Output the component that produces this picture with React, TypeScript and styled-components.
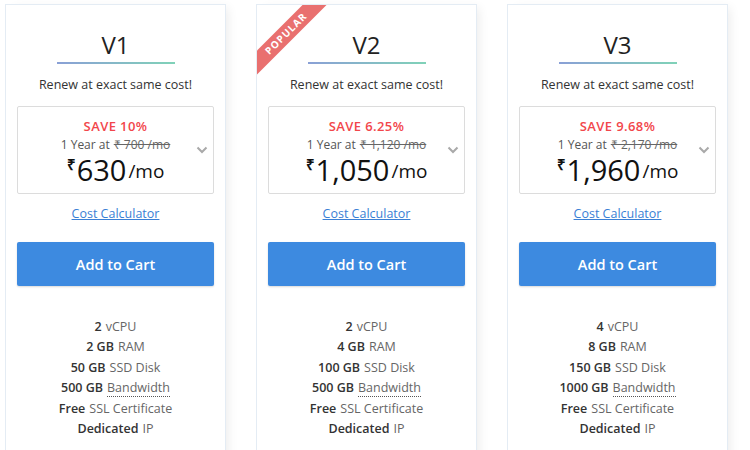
import React from "react";
import styled, { createGlobalStyle } from "styled-components";

const Global = createGlobalStyle`
  html, body { margin: 0; padding: 0; background: #ffffff; overflow: hidden; }
  body { font-family: "Open Sans", "Liberation Sans", sans-serif; color: #333; }
`;

const Row = styled.div`
  display: flex;
  gap: 30px;
  padding: 4px 0 0 5px;
  height: 446px;
  overflow: hidden;
`;

const Card = styled.div`
  position: relative;
  box-sizing: border-box;
  width: 221px;
  height: 470px;
  background: #fff;
  border: 1px solid #e4ecf4;
  box-shadow: 6px 0 10px -4px rgba(0, 0, 0, 0.08);
  padding: 26px 11px 0 11px;
  display: flex;
  flex-direction: column;
  align-items: center;
  overflow: hidden;
`;

const Ribbon = styled.div`
  position: absolute;
  left: -31px;
  top: 20px;
  width: 120px;
  height: 17px;
  background: #e9706f;
  color: #fff;
  font-size: 10px;
  font-weight: 700;
  letter-spacing: 1px;
  line-height: 17px;
  text-align: center;
  transform: rotate(-45deg);
`;

const Title = styled.div`
  font-size: 24px;
  font-weight: 500;
  color: #222;
  line-height: 28px;
  padding-bottom: 3px;
`;

const Underline = styled.div`
  width: 118px;
  height: 2px;
  background: linear-gradient(90deg, #8aa0d6, #80d2b8);
`;

const Renew = styled.div`
  margin-top: 12px;
  font-size: 12.5px;
  color: #333;
  line-height: 18px;
`;

const PriceBox = styled.div`
  position: relative;
  box-sizing: border-box;
  margin-top: 12px;
  width: 197px;
  height: 88px;
  border: 1px solid #dcdcdc;
  border-radius: 2px;
  display: flex;
  flex-direction: column;
  align-items: center;
  padding-top: 11px;
`;

const Save = styled.div`
  color: #f2464b;
  font-size: 13px;
  font-weight: 600;
  letter-spacing: 0.4px;
  line-height: 17px;
`;

const Year = styled.div`
  font-size: 12px;
  color: #555;
  line-height: 16px;
  margin-top: 2px;
  s { margin-left: 4px; color: #666; }
`;

const Price = styled.div`
  display: flex;
  align-items: flex-start;
  color: #111;
  line-height: 26px;
  margin-top: 4px;
`;

const Rupee = styled.span`
  font-size: 15px;
  line-height: 16px;
  margin-top: -1px;
  margin-right: 1px;
  font-weight: 600;
`;

const Amount = styled.span`
  font-size: 29px;
`;

const Per = styled.span`
  font-size: 19px;
  align-self: flex-end;
  line-height: 24px;
  margin-left: 2px;
`;

const Chevron = styled.svg`
  position: absolute;
  right: 5px;
  top: 39px;
`;

const Calc = styled.a`
  margin-top: 11px;
  font-size: 12.5px;
  color: #3a7fd5;
  text-decoration: underline;
  line-height: 18px;
`;

const CartButton = styled.button`
  margin-top: 19px;
  width: 197px;
  height: 44px;
  border: none;
  border-radius: 2px;
  background: #3d8ae0;
  color: #fff;
  font-family: inherit;
  font-size: 14.5px;
  font-weight: 600;
  box-shadow: 0 1px 2px rgba(0, 0, 0, 0.15);
`;

const Features = styled.ul`
  list-style: none;
  margin: 31px 0 0;
  padding: 0;
  text-align: center;
`;

const Feature = styled.li`
  font-size: 12.5px;
  line-height: 20.4px;
  color: #666;
  b { color: #333; font-weight: 600; margin-right: 4px; }
`;

const Dotted = styled.span`
  border-bottom: 1px dotted #555;
`;

type Plan = {
  name: string;
  popular?: boolean;
  save: string;
  old: string;
  price: string;
  cpu: string;
  ram: string;
  disk: string;
  bw: string;
};

const plans: Plan[] = [
  { name: "V1", save: "SAVE 10%", old: "₹ 700 /mo", price: "630", cpu: "2", ram: "2 GB", disk: "50 GB", bw: "500 GB" },
  { name: "V2", popular: true, save: "SAVE 6.25%", old: "₹ 1,120 /mo", price: "1,050", cpu: "2", ram: "4 GB", disk: "100 GB", bw: "500 GB" },
  { name: "V3", save: "SAVE 9.68%", old: "₹ 2,170 /mo", price: "1,960", cpu: "4", ram: "8 GB", disk: "150 GB", bw: "1000 GB" },
];

export default function App() {
  return (
    <>
      <Global />
      <Row>
        {plans.map((p) => (
          <Card key={p.name}>
            {p.popular && <Ribbon>POPULAR</Ribbon>}
            <Title>{p.name}</Title>
            <Underline />
            <Renew>Renew at exact same cost!</Renew>
            <PriceBox>
              <Save>{p.save}</Save>
              <Year>
                1 Year at<s>{p.old}</s>
              </Year>
              <Price>
                <Rupee>₹</Rupee>
                <Amount>{p.price}</Amount>
                <Per>/mo</Per>
              </Price>
              <Chevron width="12" height="8" viewBox="0 0 12 8">
                <polyline points="1.5,1.5 6,6 10.5,1.5" fill="none" stroke="#a9a9a9" strokeWidth="2" />
              </Chevron>
            </PriceBox>
            <Calc href="#">Cost Calculator</Calc>
            <CartButton>Add to Cart</CartButton>
            <Features>
              <Feature><b>{p.cpu}</b>vCPU</Feature>
              <Feature><b>{p.ram}</b>RAM</Feature>
              <Feature><b>{p.disk}</b>SSD Disk</Feature>
              <Feature><b>{p.bw}</b><Dotted>Bandwidth</Dotted></Feature>
              <Feature><b>Free</b>SSL Certificate</Feature>
              <Feature><b>Dedicated</b>IP</Feature>
            </Features>
          </Card>
        ))}
      </Row>
    </>
  );
}
